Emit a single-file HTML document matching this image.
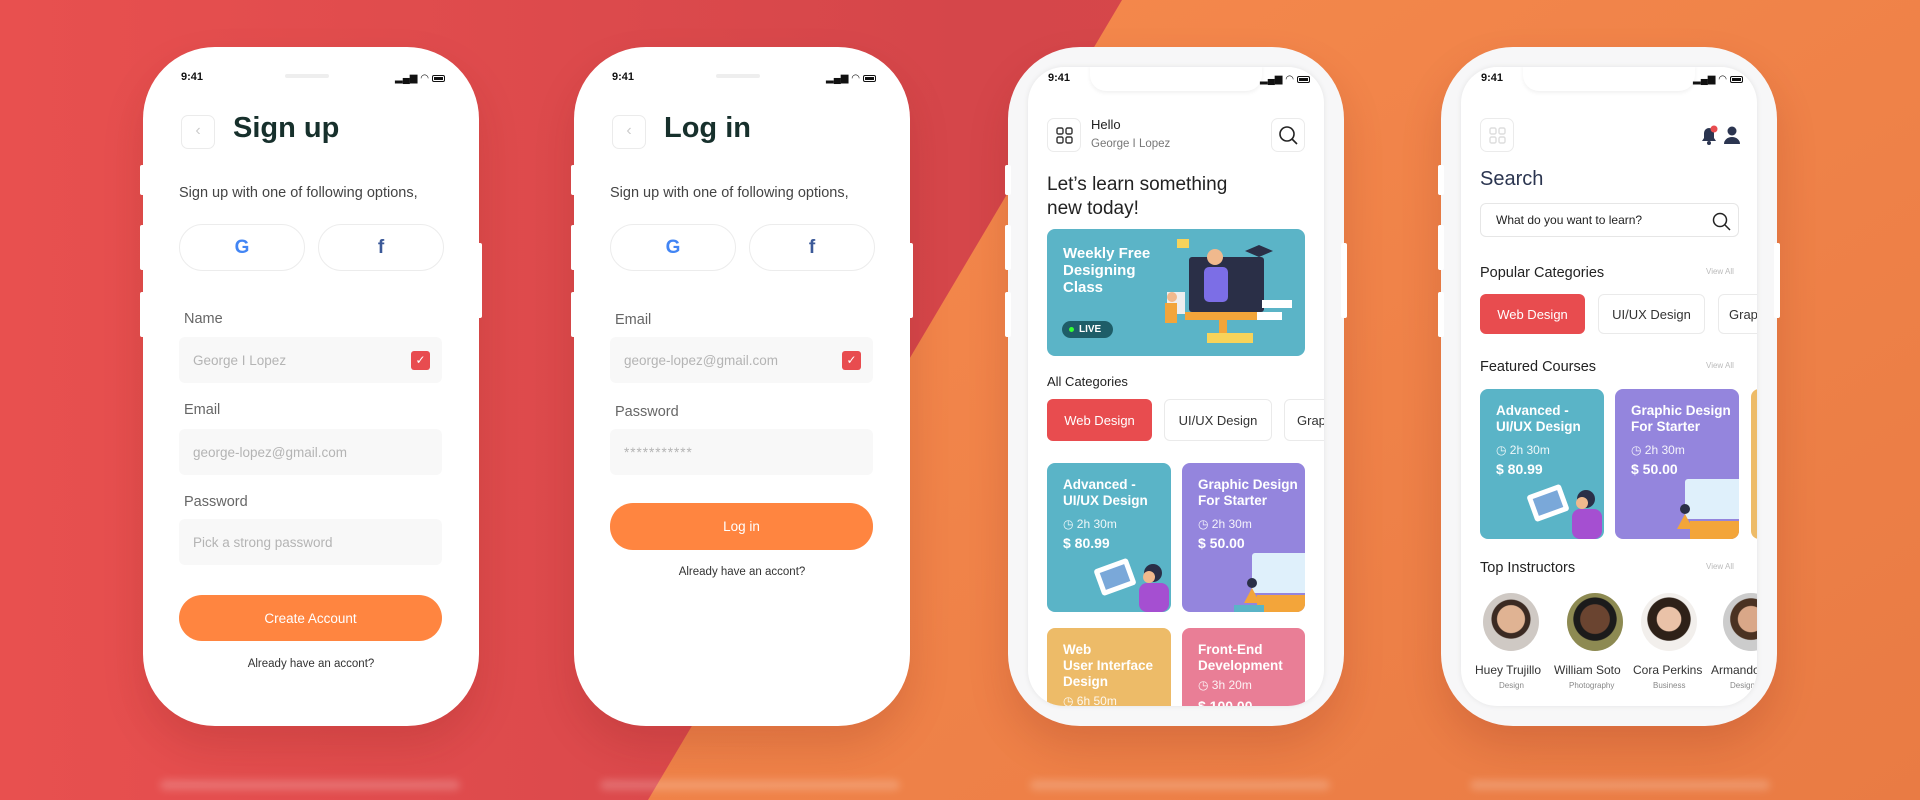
<!DOCTYPE html>
<html><head><meta charset="utf-8"><style>
*{margin:0;padding:0;box-sizing:border-box}
body{width:1920px;height:800px;overflow:hidden;position:relative;font-family:"Liberation Sans",sans-serif;background:#E8504F}
.abs{position:absolute}
.phone{position:absolute;top:47px;width:336px;height:679px;background:#fff;border-radius:72px;box-shadow:0 20px 40px rgba(120,30,20,.18)}
.phone .side{position:absolute;background:#fff;width:6px;border-radius:2px}
.t{position:absolute;white-space:nowrap}
.time{font-size:11px;font-weight:bold;color:#111}
.status{position:absolute;top:26px;right:34px;font-size:10px;color:#111;display:flex;gap:3px;align-items:center}
.batt{width:13px;height:7px;border:1.3px solid #111;border-radius:2px;position:relative}
.batt:after{content:"";position:absolute;inset:1px;background:#111}
.pill{position:absolute;height:4px;width:44px;background:#eee;border-radius:2px}
.soc{position:absolute;height:47px;width:126px;border:1px solid #ececec;border-radius:24px;display:flex;align-items:center;justify-content:center}
.lab{font-size:14.5px;color:#666}
.inp{position:absolute;left:36px;width:263px;height:46px;background:#f8f8f8;border-radius:6px;font-size:13.5px;color:#b4b4b4;padding-left:14px;display:flex;align-items:center}
.chk{position:absolute;right:12px;top:14px;width:19px;height:19px;background:#E84C4F;border-radius:3px;color:#fff;font-size:12px;text-align:center;line-height:19px}
.btn{position:absolute;left:36px;width:263px;height:46px;background:#FF8540;border-radius:23px;color:#fff;font-size:13.5px;display:flex;align-items:center;justify-content:center}
.small{font-size:11.5px;color:#333}
.screen{position:absolute;left:20px;top:20px;width:296px;height:639px;border-radius:36px;overflow:hidden;background:#fff;box-shadow:0 0 6px rgba(0,0,0,.08)}
.notch{position:absolute;left:62px;top:-2px;width:172px;height:26px;background:#fff;border-radius:0 0 16px 16px;box-shadow:0 2px 4px rgba(0,0,0,.06)}
.chip{position:absolute;height:42px;border-radius:6px;font-size:13px;display:flex;align-items:center;justify-content:center;border:1px solid #eaeaea;color:#333;background:#fff}
.chip.r{background:#E84C4F;color:#fff;border:none}
.card{position:absolute;border-radius:8px;overflow:hidden;color:#fff}
.card .h{position:absolute;left:16px;top:14px;font-size:13.5px;font-weight:bold;line-height:16px}
.card .d{position:absolute;left:16px;font-size:12px;opacity:.9}
.card .p{position:absolute;left:16px;font-size:14px;font-weight:bold}
.box{position:absolute;width:34px;height:34px;border:1px solid #ebebeb;border-radius:7px;background:#fff}
.va{position:absolute;font-size:8px;color:#bbb}
.sec{font-size:14.5px;color:#222}
</style></head><body>
<svg class="abs" style="left:0;top:0" width="1920" height="800">
<defs><linearGradient id="g" x1="0" y1="0" x2="1" y2="1"><stop offset="0" stop-color="#F68A4D"/><stop offset="1" stop-color="#E97B44"/></linearGradient>
<linearGradient id="g2" x1="0" y1="0" x2="1" y2="0"><stop offset="0" stop-color="#E8504F"/><stop offset="0.5" stop-color="#D5464A"/><stop offset="1" stop-color="#D84A4B"/></linearGradient></defs>
<rect width="1920" height="800" fill="url(#g2)"/>
<polygon points="1122,0 1920,0 1920,800 648,800" fill="url(#g)"/>
<g fill="#fff" opacity=".2" filter="blur(4px)"><rect x="160" y="780" width="300" height="10" rx="5"/><rect x="600" y="780" width="300" height="10" rx="5"/><rect x="1030" y="780" width="300" height="10" rx="5"/><rect x="1470" y="780" width="300" height="10" rx="5"/></g>
</svg>

<!-- PHONE 1 -->
<div class="phone" style="left:143px">
<div class="side" style="left:-3px;top:118px;height:30px"></div><div class="side" style="left:-3px;top:178px;height:45px"></div><div class="side" style="left:-3px;top:245px;height:45px"></div><div class="side" style="right:-3px;top:196px;height:75px"></div>
<div class="t time" style="left:38px;top:24px">9:41</div>
<div class="pill" style="left:142px;top:27px"></div>
<div class="status">▂▄▆ ◠ <span class="batt"></span></div>
<div class="box" style="left:38px;top:68px;color:#ccc;font-size:16px;text-align:center;line-height:30px">‹</div>
<div class="t" style="left:90px;top:65px;font-size:29px;font-weight:bold;color:#17302c">Sign up</div>
<div class="t" style="left:36px;top:138px;font-size:14.5px;color:#444">Sign up with one of following options,</div>
<div class="soc" style="left:36px;top:177px"><b style="font-size:19px;color:#4285F4">G</b></div>
<div class="soc" style="left:175px;top:177px"><b style="font-size:19px;color:#3b5998">f</b></div>
<div class="t lab" style="left:41px;top:264px">Name</div>
<div class="inp" style="top:290px">George I Lopez<div class="chk">✓</div></div>
<div class="t lab" style="left:41px;top:355px">Email</div>
<div class="inp" style="top:382px">george-lopez@gmail.com</div>
<div class="t lab" style="left:41px;top:447px">Password</div>
<div class="inp" style="top:472px">Pick a strong password</div>
<div class="btn" style="top:548px">Create Account</div>
<div class="t small" style="left:0;width:336px;text-align:center;top:611px">Already have an accont?</div>
</div>

<!-- PHONE 2 -->
<div class="phone" style="left:574px">
<div class="side" style="left:-3px;top:118px;height:30px"></div><div class="side" style="left:-3px;top:178px;height:45px"></div><div class="side" style="left:-3px;top:245px;height:45px"></div><div class="side" style="right:-3px;top:196px;height:75px"></div>
<div class="t time" style="left:38px;top:24px">9:41</div>
<div class="pill" style="left:142px;top:27px"></div>
<div class="status">▂▄▆ ◠ <span class="batt"></span></div>
<div class="box" style="left:38px;top:68px;color:#ccc;font-size:16px;text-align:center;line-height:30px">‹</div>
<div class="t" style="left:90px;top:65px;font-size:29px;font-weight:bold;color:#17302c">Log in</div>
<div class="t" style="left:36px;top:138px;font-size:14.5px;color:#444">Sign up with one of following options,</div>
<div class="soc" style="left:36px;top:177px"><b style="font-size:19px;color:#4285F4">G</b></div>
<div class="soc" style="left:175px;top:177px"><b style="font-size:19px;color:#3b5998">f</b></div>
<div class="t lab" style="left:41px;top:265px">Email</div>
<div class="inp" style="top:290px">george-lopez@gmail.com<div class="chk">✓</div></div>
<div class="t lab" style="left:41px;top:357px">Password</div>
<div class="inp" style="top:382px;letter-spacing:1px">***********</div>
<div class="btn" style="top:456px;height:47px">Log in</div>
<div class="t small" style="left:0;width:336px;text-align:center;top:519px">Already have an accont?</div>
</div>

<!-- PHONE 3 -->
<div class="phone" style="left:1008px;background:#f7f7f8">
<div class="side" style="left:-3px;top:118px;height:30px"></div><div class="side" style="left:-3px;top:178px;height:45px"></div><div class="side" style="left:-3px;top:245px;height:45px"></div><div class="side" style="right:-3px;top:196px;height:75px"></div>
<div class="screen">
<div class="notch"></div>
<div class="t time" style="left:20px;top:5px">9:41</div>
<div class="status" style="top:7px;right:14px">▂▄▆ ◠ <span class="batt"></span></div>
<div class="box" style="left:19px;top:51px"><svg width="32" height="32" viewBox="0 0 32 32" fill="none" stroke="#333" stroke-width="1.4"><rect x="9" y="9" width="6" height="6" rx="1.5"/><rect x="18" y="9" width="6" height="6" rx="1.5"/><rect x="9" y="18" width="6" height="6" rx="1.5"/><rect x="18" y="18" width="6" height="6" rx="1.5"/></svg></div>
<div class="t" style="left:63px;top:50px;font-size:13px;color:#222">Hello</div>
<div class="t" style="left:63px;top:71px;font-size:11.5px;color:#777">George I Lopez</div>
<div class="box" style="left:243px;top:51px"><svg width="32" height="32" viewBox="0 0 32 32" fill="none" stroke="#222" stroke-width="1.6"><circle cx="15" cy="15" r="7"/><path d="M20 20l5 5"/></svg></div>
<div class="t" style="left:19px;top:106px;font-size:19px;line-height:24px;color:#222">Let’s learn something<br>new today!</div>
<div class="card" style="left:19px;top:162px;width:258px;height:127px;background:#5BB4C7">
 <div class="h" style="left:16px;top:16px;font-size:15px;line-height:17px">Weekly Free<br>Designing<br>Class</div>
 <div class="abs" style="left:15px;top:92px;width:51px;height:17px;background:#1e5d68;border-radius:9px;font-size:10px;font-weight:bold;padding-left:17px;line-height:17px">LIVE<span class="abs" style="left:7px;top:6px;width:5px;height:5px;border-radius:50%;background:#3f3"></span></div>
 <svg class="abs" style="left:110px;top:8px" width="148" height="119"><rect x="32" y="20" width="75" height="55" rx="3" fill="#2a2f47"/><rect x="28" y="75" width="80" height="8" fill="#f3a53a"/><rect x="62" y="83" width="8" height="14" fill="#f3a53a"/><rect x="50" y="96" width="46" height="10" fill="#f7d35a"/><circle cx="58" cy="20" r="8" fill="#f0b98d"/><rect x="47" y="30" width="24" height="35" rx="5" fill="#7c6ee6"/><path d="M88 14l14-6 14 6-14 6z" fill="#2a2f47"/><rect x="10" y="55" width="18" height="22" fill="#eee"/><circle cx="15" cy="60" r="5" fill="#f0b98d"/><rect x="8" y="66" width="12" height="20" fill="#f3a53a"/><rect x="105" y="63" width="30" height="8" fill="#fff"/><rect x="100" y="75" width="25" height="8" fill="#fff"/><rect x="20" y="2" width="12" height="9" fill="#f7d35a"/></svg>
</div>
<div class="t" style="left:19px;top:307px;font-size:13px;color:#222">All Categories</div>
<div class="chip r" style="left:19px;top:332px;width:105px">Web Design</div>
<div class="chip" style="left:136px;top:332px;width:108px">UI/UX Design</div>
<div class="chip" style="left:256px;top:332px;width:80px;justify-content:flex-start;padding-left:12px">Graphic</div>
<div class="card" style="left:19px;top:396px;width:124px;height:149px;background:#5AB4C7">
 <div class="h">Advanced -<br>UI/UX Design</div><div class="d" style="top:54px">◷ 2h 30m</div><div class="p" style="top:72px">$ 80.99</div>
 <svg class="abs" style="left:40px;top:80px" width="84" height="69"><rect x="10" y="20" width="36" height="28" rx="3" fill="#fff" transform="rotate(-20 28 34)"/><rect x="15" y="25" width="26" height="18" fill="#7aa8d9" transform="rotate(-20 28 34)"/><circle cx="66" cy="30" r="9" fill="#2a2f47"/><rect x="52" y="40" width="30" height="29" rx="8" fill="#a54fd1"/><circle cx="62" cy="34" r="6" fill="#f0b98d"/></svg>
</div>
<div class="card" style="left:154px;top:396px;width:123px;height:149px;background:#9485DD">
 <div class="h">Graphic Design<br>For Starter</div><div class="d" style="top:54px">◷ 2h 30m</div><div class="p" style="top:72px">$ 50.00</div>
 <svg class="abs" style="left:40px;top:80px" width="83" height="69"><rect x="30" y="10" width="60" height="40" rx="3" fill="#dff0fb"/><rect x="35" y="52" width="50" height="17" fill="#f3a53a"/><circle cx="30" cy="40" r="5" fill="#2a2f47"/><path d="M22 60l8-15 8 15z" fill="#f3a53a"/><rect x="12" y="62" width="30" height="7" fill="#5ab4c7"/></svg>
</div>
<div class="card" style="left:19px;top:561px;width:124px;height:100px;background:#EDBB68">
 <div class="h">Web<br>User Interface<br>Design</div><div class="d" style="top:66px">◷ 6h 50m</div>
</div>
<div class="card" style="left:154px;top:561px;width:123px;height:100px;background:#E97E96">
 <div class="h">Front-End<br>Development</div><div class="d" style="top:50px">◷ 3h 20m</div><div class="p" style="top:70px">$ 100.00</div>
</div>
</div>
</div>

<!-- PHONE 4 -->
<div class="phone" style="left:1441px;background:#f7f7f8">
<div class="side" style="left:-3px;top:118px;height:30px"></div><div class="side" style="left:-3px;top:178px;height:45px"></div><div class="side" style="left:-3px;top:245px;height:45px"></div><div class="side" style="right:-3px;top:196px;height:75px"></div>
<div class="screen">
<div class="notch"></div>
<div class="t time" style="left:20px;top:5px">9:41</div>
<div class="status" style="top:7px;right:14px">▂▄▆ ◠ <span class="batt"></span></div>
<div class="box" style="left:19px;top:51px"><svg width="32" height="32" viewBox="0 0 32 32" fill="none" stroke="#ddd" stroke-width="1.4"><rect x="9" y="9" width="6" height="6" rx="1.5"/><rect x="18" y="9" width="6" height="6" rx="1.5"/><rect x="9" y="18" width="6" height="6" rx="1.5"/><rect x="18" y="18" width="6" height="6" rx="1.5"/></svg></div>
<svg class="abs" style="left:238px;top:57px" width="42" height="22"><path d="M3 17h14l-2-3v-5a5 5 0 0 0-10 0v5z" fill="#2b3550"/><circle cx="10" cy="19" r="2" fill="#2b3550"/><circle cx="15" cy="5" r="3.5" fill="#E84C4F"/><circle cx="33" cy="7" r="4.5" fill="#2b3550"/><path d="M25 20a8 7 0 0 1 16 0z" fill="#2b3550"/></svg>
<div class="t" style="left:19px;top:101px;font-size:20px;color:#2b3550">Search</div>
<div class="abs" style="left:19px;top:136px;width:259px;height:34px;border:1px solid #e6e6e6;border-radius:6px;font-size:12px;color:#222;padding-left:15px;line-height:32px">What do you want to learn?<svg class="abs" style="right:6px;top:6px" width="22" height="22" fill="none" stroke="#222" stroke-width="1.5"><circle cx="10" cy="10" r="6.5"/><path d="M15 15l5 5"/></svg></div>
<div class="t sec" style="left:19px;top:198px">Popular Categories</div><div class="va" style="left:245px;top:200px">View All</div>
<div class="chip r" style="left:19px;top:227px;width:105px;height:40px">Web Design</div>
<div class="chip" style="left:137px;top:227px;width:107px;height:40px">UI/UX Design</div>
<div class="chip" style="left:257px;top:227px;width:80px;height:40px;justify-content:flex-start;padding-left:10px">Graphic</div>
<div class="t sec" style="left:19px;top:292px">Featured Courses</div><div class="va" style="left:245px;top:294px">View All</div>
<div class="card" style="left:19px;top:322px;width:124px;height:150px;background:#5AB4C7">
 <div class="h">Advanced -<br>UI/UX Design</div><div class="d" style="top:54px">◷ 2h 30m</div><div class="p" style="top:72px">$ 80.99</div>
 <svg class="abs" style="left:40px;top:80px" width="84" height="70"><rect x="10" y="20" width="36" height="28" rx="3" fill="#fff" transform="rotate(-20 28 34)"/><rect x="15" y="25" width="26" height="18" fill="#7aa8d9" transform="rotate(-20 28 34)"/><circle cx="66" cy="30" r="9" fill="#2a2f47"/><rect x="52" y="40" width="30" height="30" rx="8" fill="#a54fd1"/><circle cx="62" cy="34" r="6" fill="#f0b98d"/></svg>
</div>
<div class="card" style="left:154px;top:322px;width:124px;height:150px;background:#9485DD">
 <div class="h">Graphic Design<br>For Starter</div><div class="d" style="top:54px">◷ 2h 30m</div><div class="p" style="top:72px">$ 50.00</div>
 <svg class="abs" style="left:40px;top:80px" width="84" height="70"><rect x="30" y="10" width="60" height="40" rx="3" fill="#dff0fb"/><rect x="35" y="52" width="50" height="18" fill="#f3a53a"/><circle cx="30" cy="40" r="5" fill="#2a2f47"/><path d="M22 60l8-15 8 15z" fill="#f3a53a"/></svg>
</div>
<div class="card" style="left:290px;top:322px;width:20px;height:150px;background:#EDBB68"></div>
<div class="t sec" style="left:19px;top:493px">Top Instructors</div><div class="va" style="left:245px;top:495px">View All</div>
<div class="abs" style="left:22px;top:526px;width:56px;height:58px;border-radius:50%;background:radial-gradient(circle at 50% 45%,#e0b393 0 32%,#3b2a22 34% 45%,#cfc9c4 47%)"></div>
<div class="abs" style="left:106px;top:526px;width:56px;height:58px;border-radius:50%;background:radial-gradient(circle at 50% 45%,#6a4430 0 34%,#1b1b1b 36% 50%,#8d8a52 52%)"></div>
<div class="abs" style="left:180px;top:526px;width:56px;height:58px;border-radius:50%;background:radial-gradient(circle at 50% 45%,#eac2a8 0 28%,#2e2118 30% 50%,#f2efec 52%)"></div>
<div class="abs" style="left:262px;top:526px;width:56px;height:58px;border-radius:50%;background:radial-gradient(circle at 50% 45%,#d9a788 0 30%,#4a3222 32% 48%,#ccc 50%)"></div>
<div class="t" style="left:14px;top:596px;font-size:12px;color:#333">Huey Trujillo</div>
<div class="t" style="left:93px;top:596px;font-size:12px;color:#333">William Soto</div>
<div class="t" style="left:172px;top:596px;font-size:12px;color:#333">Cora Perkins</div>
<div class="t" style="left:250px;top:596px;font-size:12px;color:#333">Armando</div>
<div class="t" style="left:38px;top:614px;font-size:8px;color:#888">Design</div>
<div class="t" style="left:108px;top:614px;font-size:8px;color:#888">Photography</div>
<div class="t" style="left:192px;top:614px;font-size:8px;color:#888">Business</div>
<div class="t" style="left:269px;top:614px;font-size:8px;color:#888">Design</div>
</div>
</div>
</body></html>
